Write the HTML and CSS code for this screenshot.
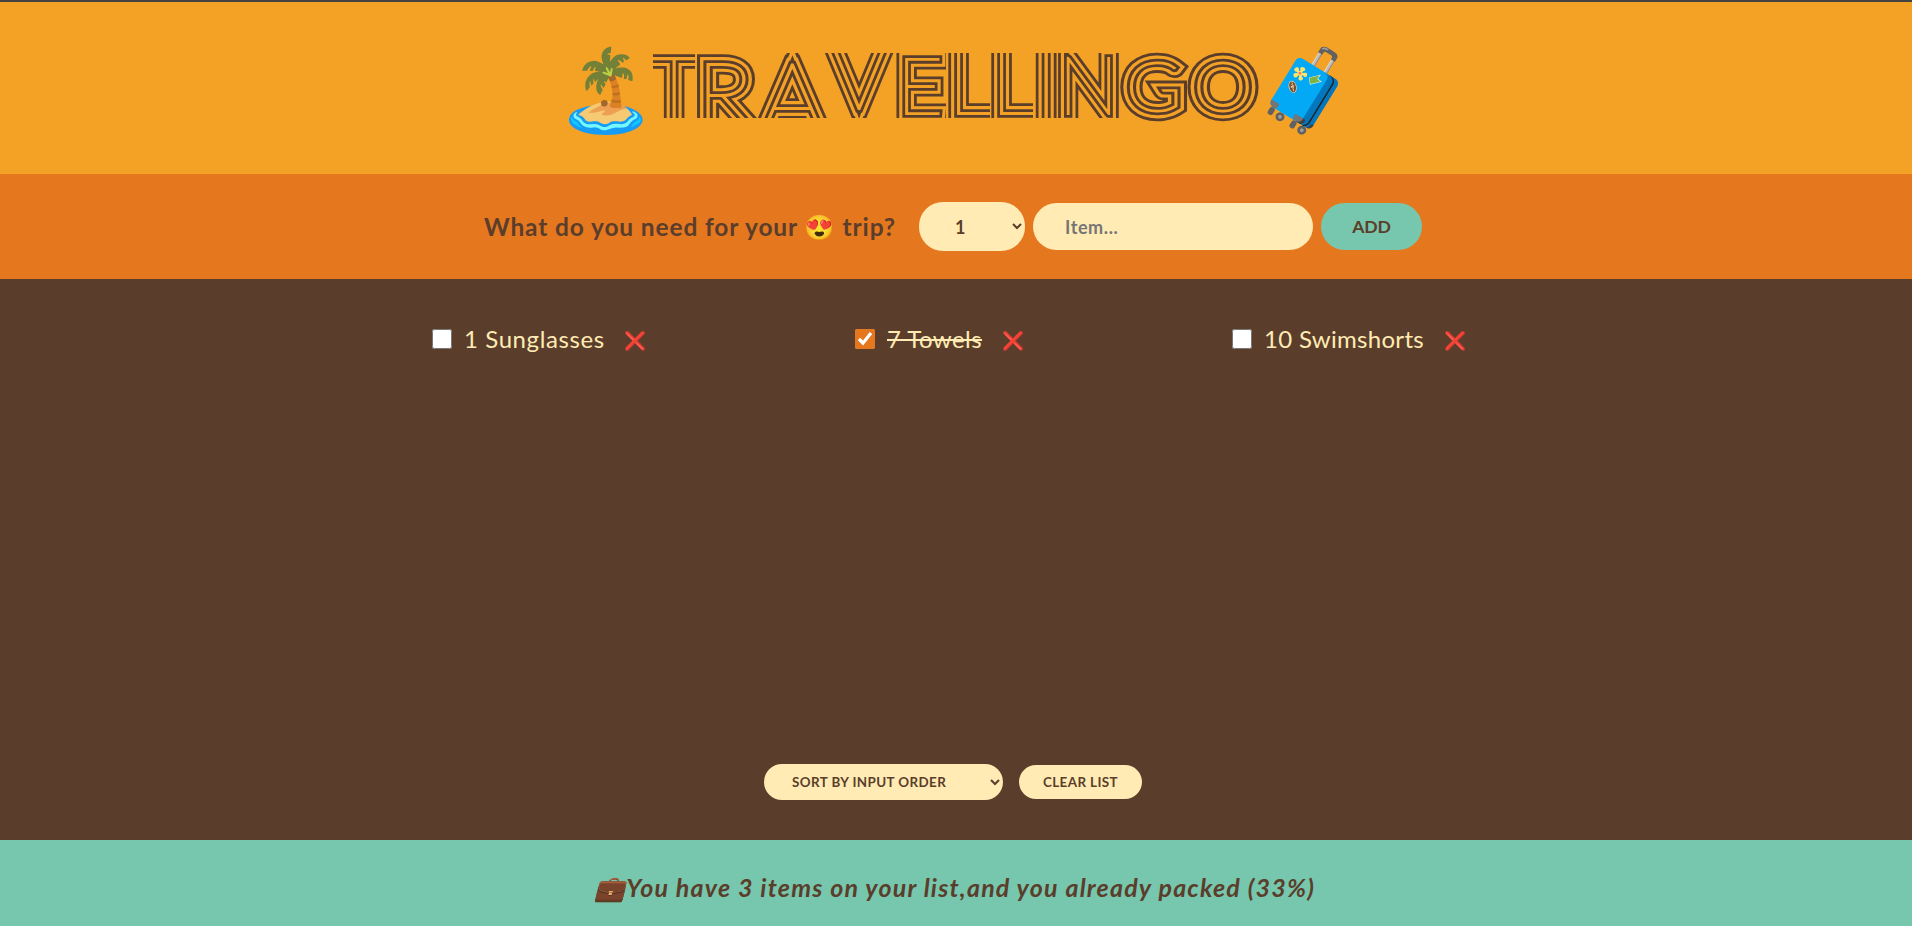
FILE: index.html
```html
<!DOCTYPE html>
<html lang="en">
<head>
<meta charset="utf-8">
<title>Travellingo</title>
<link rel="stylesheet" href="styles.css">
</head>
<body>
<div class="app">
  <header class="header">
    <h1 class="logo">
      <span class="emoji island">🏝️</span>
      <svg class="wordmark" width="610" height="76" viewBox="651 48 610 76">
        <defs>
          <clipPath id="caps"><rect x="640" y="53" width="480" height="65"/><rect x="1120" y="48" width="150" height="76"/></clipPath>
          <clipPath id="t"><rect x="653" y="40" width="42" height="90"/></clipPath>
          <clipPath id="e"><rect x="890" y="40" width="56" height="90"/></clipPath>
          <clipPath id="l1"><rect x="940" y="40" width="50" height="90"/></clipPath>
          <clipPath id="l2"><rect x="985" y="40" width="48" height="90"/></clipPath>
          <g id="word">
            <text x="674" y="126" font-size="96" text-anchor="middle" clip-path="url(#t)">T</text>
            <text transform="translate(696.5 126) scale(1.08 1)" font-size="88">R</text>
            <text transform="translate(760.5 132) scale(1.03 1)" font-size="97">A</text>
            <text x="828.5" y="109" font-size="96">V</text>
            <text x="897" y="114" font-size="79" clip-path="url(#e)">E</text>
            <text x="947" y="114" font-size="95" clip-path="url(#l1)">L</text>
            <text x="990" y="114" font-size="95" clip-path="url(#l2)">L</text>
            <text x="1032.6" y="126" font-size="112">I</text>
            <text x="1058.5" y="114" font-size="80">N</text>
            <text transform="translate(1125.8 111) scale(1.1 1)" font-size="69">G</text>
            <text transform="translate(1223 111) scale(1.11 1)" text-anchor="middle" font-size="69">O</text>
          </g>
        </defs>
        <g clip-path="url(#caps)">
          <use href="#word" class="band band-1"/>
          <use href="#word" class="band band-2"/>
          <use href="#word" class="band band-3"/>
          <use href="#word" class="band band-4"/>
        </g>
      </svg>
      <span class="emoji suitcase">🧳</span>
    </h1>
  </header>
  <form class="add-form">
    <h3 class="question">What do you need for your 😍 trip?</h3>
    <select class="quantity"><option>1</option></select>
    <input class="item-input" type="text" placeholder="Item...">
    <button class="add" type="button">ADD</button>
  </form>
  <main class="list">
    <ul class="items">
      <li class="item"><input type="checkbox"><span class="name sunglasses">1 Sunglasses</span><button class="remove" type="button">❌</button></li>
      <li class="item"><input type="checkbox" checked><span class="name packed">7 Towels</span><button class="remove" type="button">❌</button></li>
      <li class="item"><input type="checkbox"><span class="name swimshorts">10 Swimshorts</span><button class="remove" type="button">❌</button></li>
    </ul>
    <div class="actions">
      <select class="sort"><option>SORT BY INPUT ORDER</option></select>
      <button class="clear" type="button">CLEAR LIST</button>
    </div>
  </main>
  <footer class="stats"><em>💼You have 3 items on your list,and you already packed (33%)</em></footer>
</div>
</body>
</html>
```
FILE: styles.css
```css
* { box-sizing: border-box; margin: 0; padding: 0; }
body { font-family: Lato, "Noto Color Emoji", sans-serif; color: #5a3e2b; }
.app { height: 926px; border-top: 2px solid #434343; display: grid; grid-template-rows: 172px 105px 561px 86px; }
.header { background: #f4a226; }
.logo { display: flex; align-items: flex-start; padding: 46px 0 0 556px; height: 172px; font-weight: 400; }
.emoji { flex: none; width: 99px; font-size: 80px; line-height: 78px; white-space: nowrap; }
.island { margin-right: -4px; }
.suitcase { margin-left: -5px; }
.wordmark { display: block; flex: none; }
.wordmark text { font-family: Lato, sans-serif; font-weight: 100; }
.band { stroke-linejoin: miter; }
.band-1 { fill: #5a3e2b; stroke: #5a3e2b; stroke-width: 19.4px; }
.band-2 { fill: #f4a226; stroke: #f4a226; stroke-width: 13.8px; }
.band-3 { fill: #5a3e2b; stroke: #5a3e2b; stroke-width: 7.6px; }
.band-4 { fill: #f4a226; stroke: #f4a226; stroke-width: 2px; }
.add-form { background: #e5771f; display: flex; align-items: center; padding-left: 484px; }
.add-form > * { flex: none; }
.question { width: 435px; font-size: 24.5px; line-height: 30px; letter-spacing: .87px; white-space: nowrap; }
select, input, button { font-family: Lato, "Noto Color Emoji", sans-serif; color: #5a3e2b; border: 0; outline: 0; font-weight: 700; }
.quantity { width: 106px; height: 49px; padding: 0 32px; border-radius: 24px; background: #ffebb3; font-size: 18px; margin-right: 8px; }
.item-input[type="text"] { width: 280px; height: 47px; padding: 0 32px; border-radius: 24px; background: #ffebb3; font-size: 18px; letter-spacing: .6px; margin-right: 8px; }
.add { width: 101px; height: 47px; border-radius: 24px; background: #76c7ad; font-size: 17.6px; letter-spacing: -.2px; }
.list { background: #5a3e2b; color: #ffebb3; display: flex; flex-direction: column; justify-content: space-between; align-items: stretch; padding: 44px 0 40px; }
.items { list-style: none; display: grid; grid-template-columns: 423px 377px auto; padding-left: 432px; }
.item { display: flex; align-items: center; height: 32px; font-size: 24px; }
.item input { width: 20px; height: 20px; accent-color: #e5771f; margin-right: 12px; }
.name { letter-spacing: .6px; white-space: nowrap; padding-bottom: 2px; }
.swimshorts { letter-spacing: .3px; }
.packed { text-decoration: line-through; letter-spacing: .45px; }
.remove { background: none; font-size: 18px; margin-left: 20px; padding-top: 2px; }
.actions { display: flex; align-items: center; justify-content: center; gap: 16px; padding-right: 6px; }
.sort { width: 239px; height: 36px; padding: 0 24px; border-radius: 18px; background: #ffebb3; font-size: 13.4px; letter-spacing: .4px; }
.clear { width: 123px; height: 34px; border-radius: 17px; background: #ffebb3; font-size: 13.4px; letter-spacing: .4px; }
.stats { background: #76c7ad; display: flex; align-items: center; padding: 8px 0 0 594px; font-size: 25px; font-weight: 700; white-space: nowrap; letter-spacing: 1.2px; }
```
